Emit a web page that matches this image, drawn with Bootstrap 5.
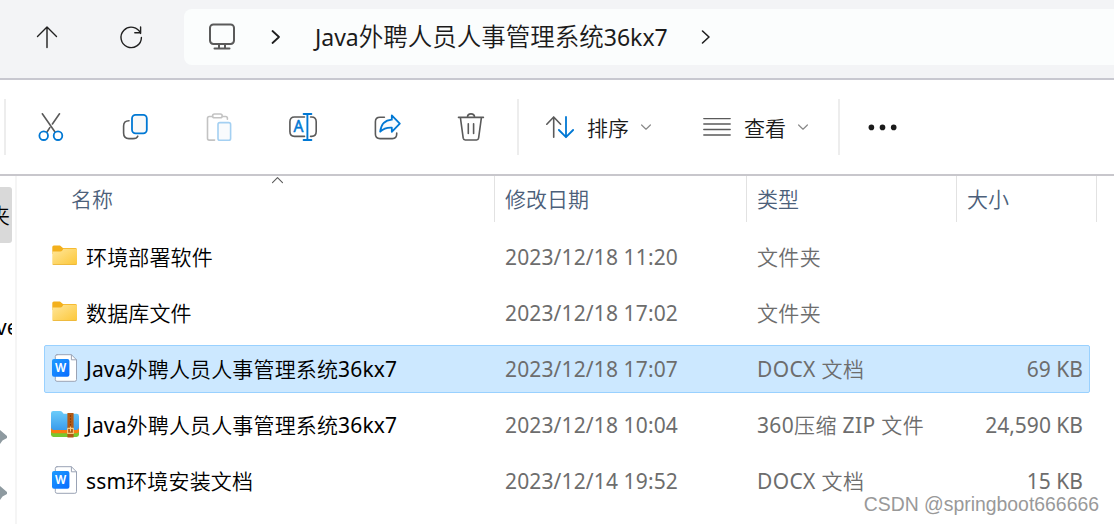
<!DOCTYPE html>
<html lang="zh-CN">
<head>
    <meta charset="UTF-8">
    <title>Java外聘人员人事管理系统36kx7</title>
    <meta name="viewport" content="width=device-width, initial-scale=1">

    <!-- Bootstrap 5 CDN -->
    <link href="https://cdn.jsdelivr.net/npm/bootstrap@5.3.0/dist/css/bootstrap.min.css" rel="stylesheet">
    <style>
        body {
            height: 524px;
            font-family: "Noto Sans", "Noto Sans CJK SC", sans-serif;
            font-size: 21px;
            font-kerning: none;
            line-height: 28px;
            color: #000;
            background: #fff;
        }
        svg {
            display: block;
            flex: none;
            fill: none;
            stroke: #5a5a5a;
            stroke-width: 1.6;
            stroke-linecap: round;
            stroke-linejoin: round;
        }
        .blue { stroke: #0078d4; }
        .dark { stroke: #1f1f1f; }
        .hanzi { font-weight: 350; }

        /* Address bar */
        .address-bar {
            height: 80px;
            padding-top: 9px;
            background: #f3f4f6;
            border-bottom: 2px solid #c8c8d0;
        }
        .nav-tools {
            width: 184px;
            height: 56px;
            gap: 58px;
            padding-left: 34px;
        }
        .address-box {
            height: 56px;
            padding-left: 24px;
            background: #fbfdfd;
            border-radius: 8px 0 0 8px;
            font-size: 23px;
            color: #1b1b1b;
        }
        .address-box .hanzi { font-size: 24.5px; }
        .crumb-sep { margin-left: 34px; }
        .crumb-name { width: 385px; margin-left: 33px; }

        /* Command bar */
        .command-bar {
            height: 96px;
            padding-left: 4px;
            border-bottom: 2px solid #c8c7cc;
            color: #1b1b1b;
        }
        .divider {
            width: 2px;
            height: 56px;
            background: #ededed;
        }
        .tool-btn {
            width: 84px;
            height: 56px;
        }
        .tool-group { margin: 0 4px 0 3px; }
        .sort-btn { margin-left: 27px; }
        .view-btn { margin-left: 51px; }
        .btn-label { margin: 1px 11px 0 13px; }
        .end-divider { margin: 0 28px 0 29px; }

        /* Navigation pane, only its right edge is visible */
        .side-pane {
            width: 17px;
            border-right: 2px solid #f5f5f5;
            padding-top: 11px;
        }
        .side-item {
            width: 12px;
            height: 56px;
        }
        .side-item.current {
            padding-right: 2px;
            background: #d9d9d9;
            border-radius: 0 3px 3px 0;
        }
        .side-text { margin-left: -4px; }
        .side-pin { padding-bottom: 4px; }

        /* File list */
        .list-grid {
            display: grid;
            grid-template-columns: 450px 252px 210px 140px;
        }
        .list-head {
            height: 46px;
            margin-bottom: 11px;
            padding-left: 28px;
            color: #4c607a;
        }
        .head-cell {
            padding: 9px 0 0 10px;
            border-right: 1px solid #e2e2e2;
        }
        .head-name { padding-left: 26px; }
        .sort-mark { margin: -9px 0 0 158px; }
        .file-row {
            display: grid;
            grid-template-columns: 460px 252px 210px 1fr;
            align-items: center;
            width: 1046px;
            height: 48px;
            margin: 0 0 8px 27px;
            padding-right: 6px;
            border: 1px solid transparent;
            border-radius: 2px;
            color: #6d6d6d;
        }
        .file-row.selected {
            background: #cce8ff;
            border-color: #99d1ff;
        }
        .file-name {
            gap: 7px;
            padding-left: 6px;
            color: #000;
            letter-spacing: .15px;
        }
        .file-name svg { margin-top: -2px; }
        .file-date { letter-spacing: .13px; }
        .file-type { letter-spacing: .35px; }

        .watermark {
            right: 15px;
            bottom: 6px;
            font-family: "Liberation Sans", sans-serif;
            font-size: 19.4px;
            color: #999;
            text-shadow: 1px 1px 1px #fff, -1px -1px 1px #fff;
        }
    </style>
</head>
<body class="d-flex flex-column overflow-hidden position-relative">

<!-- Address bar -->
<nav class="address-bar d-flex flex-shrink-0">
    <div class="nav-tools d-flex align-items-center">
        <svg class="dark" width="26" height="26" viewBox="0 0 26 26"><path d="M13 23.5V3M3.5 12.5L13 3L22.5 12.5" stroke-width="1.4"/></svg>
        <svg class="dark" width="26" height="26" viewBox="0 0 26 26"><path d="M22.6 9.4A10.2 10.2 0 1 0 23.4 13.4M22.6 3V8.8H16.8" stroke-width="1.4"/></svg>
    </div>
    <div class="address-box d-flex align-items-center flex-grow-1">
        <svg width="28" height="28" viewBox="0 0 28 28"><rect x="2" y="1.4" width="24" height="19.6" rx="3.4" stroke-width="2"/><path d="M11 21.8V25.6M17 21.8V25.6M6.5 25.6H21.5" stroke-width="2"/></svg>
        <svg class="crumb-sep dark" width="12" height="16" viewBox="0 0 12 16"><path d="M2.5 2L9 8L2.5 14" stroke-width="1.8"/></svg>
        <span class="crumb-name text-nowrap">Java<span class="hanzi">外聘人员人事管理系统</span>36kx7</span>
        <svg class="dark" width="12" height="16" viewBox="0 0 12 16"><path d="M2.5 2L9 8L2.5 14" stroke-width="1.6"/></svg>
    </div>
</nav>

<!-- Command bar -->
<div class="command-bar d-flex align-items-center flex-shrink-0">
    <div class="divider"></div>
    <div class="tool-group d-flex">
        <div class="tool-btn d-flex align-items-center justify-content-center">
            <svg width="28" height="28" viewBox="0 0 28 28"><path d="M5.3 .8L18 19M22.5 .8L15.4 11M12.8 14.6L10 19"/><g class="blue" stroke-width="1.8"><circle cx="6.7" cy="22.7" r="4.3"/><circle cx="21" cy="22.7" r="4.3"/></g></svg>
        </div>
        <div class="tool-btn d-flex align-items-center justify-content-center">
            <svg width="28" height="28" viewBox="0 0 28 28"><path d="M8 7.8Q2.6 7.8 2.6 13V20Q2.6 25.6 8 25.6H12Q15.8 25.6 16.8 23.2"/><rect class="blue" x="11" y="1.8" width="14.8" height="18.6" rx="3.6" fill="#f9f9f9" stroke-width="1.8"/></svg>
        </div>
        <div class="tool-btn d-flex align-items-center justify-content-center">
            <svg width="28" height="28" viewBox="0 0 28 28"><g stroke="#c3c3c3"><path d="M7 3.5H4.3Q2.5 3.5 2.5 5.3V25.3Q2.5 27.1 4.3 27.1H9.6M18 3.5H20.6Q22.4 3.5 22.4 5.3V6.2"/><rect x="7.6" y="1" width="9.6" height="3.8" rx="1.9"/></g><rect x="13" y="9.6" width="12.6" height="17.6" rx="1.8" stroke="#a4d0f2" fill="#f9fbfd"/></svg>
        </div>
        <div class="tool-btn d-flex align-items-center justify-content-center">
            <svg width="28" height="28" viewBox="0 0 28 28"><path d="M15.5 4H5.5Q.9 4 .9 8.8V18.6Q.9 23.4 5.5 23.4H15.5M21.6 4H22.6Q27.2 4 27.2 8.8V18.6Q27.2 23.4 22.6 23.4H21.6"/><path class="blue" d="M18.4 1V27M14.6 1H22.4M14.6 27H22.4" stroke-width="1.9"/><text x="9.4" y="18.6" text-anchor="middle" font-family="Noto Sans" font-size="15.5" fill="#0078d4" stroke="#0078d4" stroke-width=".5">A</text></svg>
        </div>
        <div class="tool-btn d-flex align-items-center justify-content-center">
            <svg width="28" height="28" viewBox="0 0 28 28"><path d="M11.4 4.3H7Q2.4 4.3 2.4 8.8V21Q2.4 25.6 7 25.6H19.4Q23.7 25.6 23.7 21V20"/><path class="blue" d="M18.8 2.4L26.8 10.6L18.8 18.8V14.6C14 14.4 10 15.8 7.2 18.7C8 12 12 7.2 18.8 6.7Z" fill="#f7fafd" stroke-width="1.8"/></svg>
        </div>
        <div class="tool-btn d-flex align-items-center justify-content-center">
            <svg width="28" height="28" viewBox="0 0 28 28"><path d="M1.5 4.4H26.4M10.4 4.2Q10.6 .9 14 .9Q17.4 .9 17.6 4.2M3.4 4.6L6.2 25.2Q6.5 27 8.2 27H19.6Q21.3 27 21.6 25.2L24.4 4.6M11.3 10.8V20.4M16.6 10.8V20.4"/></svg>
        </div>
    </div>
    <div class="divider"></div>
    <div class="sort-btn d-flex align-items-center">
        <svg width="28" height="28" viewBox="0 0 28 28"><path d="M7.7 24.2V4M.8 11.2L7.7 4L14.6 11.2"/><path class="blue" d="M20 4V24.2M12.9 17L20 24.2L27.1 17" stroke-width="1.8"/></svg>
        <span class="btn-label hanzi">排序</span>
        <svg width="12" height="8" viewBox="0 0 12 8"><path d="M1.6 2L6 6.2L10.4 2" stroke="#8a8a8a" stroke-width="1.2"/></svg>
    </div>
    <div class="view-btn d-flex align-items-center">
        <svg width="28" height="28" viewBox="0 0 28 28"><path d="M.8 5.6H27.2M.8 11H27.2M.8 16.5H27.2M.8 22H27.2" stroke-width="1.4"/></svg>
        <span class="btn-label hanzi">查看</span>
        <svg width="12" height="8" viewBox="0 0 12 8"><path d="M1.6 2L6 6.2L10.4 2" stroke="#8a8a8a" stroke-width="1.2"/></svg>
    </div>
    <div class="divider end-divider"></div>
    <svg width="30" height="8" viewBox="0 0 30 8"><g fill="#1b1b1b" stroke="none"><circle cx="3.4" cy="4.4" r="2.8"/><circle cx="14.5" cy="4.4" r="2.8"/><circle cx="25.7" cy="4.4" r="2.8"/></g></svg>
</div>

<div class="d-flex flex-grow-1">
    <!-- Navigation pane -->
    <aside class="side-pane flex-shrink-0">
        <div class="side-item current d-flex align-items-center justify-content-end overflow-hidden"><span class="hanzi">夹</span></div>
        <div class="side-item"></div>
        <div class="side-item d-flex align-items-center overflow-hidden"><span class="side-text">ve</span></div>
        <div class="side-item"></div>
        <div class="side-item side-pin d-flex align-items-center">
            <svg width="8" height="18" viewBox="0 0 8 18"><path d="M0 2L7 8V10L2.5 12.5L0 16Z" fill="#8e9aa0" stroke="none"/></svg>
        </div>
        <div class="side-item side-pin d-flex align-items-center">
            <svg width="8" height="18" viewBox="0 0 8 18"><path d="M0 2L7 8V10L2.5 12.5L0 16Z" fill="#8e9aa0" stroke="none"/></svg>
        </div>
    </aside>

    <!-- File list -->
    <main class="flex-grow-1">
        <div class="list-grid list-head hanzi">
            <div class="head-cell head-name d-flex align-items-start">名称
                <svg class="sort-mark" width="13" height="8" viewBox="0 0 13 8"><path d="M1.5 6.6L6.5 1.6L11.5 6.6" stroke-width="1.1"/></svg>
            </div>
            <div class="head-cell">修改日期</div>
            <div class="head-cell">类型</div>
            <div class="head-cell">大小</div>
        </div>
        <div id="fileList"></div>
    </main>
</div>

<div class="watermark position-absolute text-nowrap">CSDN @springboot666666</div>

<script src="https://cdn.jsdelivr.net/npm/bootstrap@5.3.0/dist/js/bootstrap.bundle.min.js"></script>
<script>
const icons = {
    folder: `<svg width="28" height="28" viewBox="0 0 28 28">
        <defs><linearGradient id="fold" x2="1" y2="1"><stop stop-color="#ffe69a"/><stop offset="1" stop-color="#fcc738"/></linearGradient></defs>
        <g stroke="none"><path d="M1.3 5Q1.3 3.4 2.9 3.4H9L12 6H24.5Q26 6 26 7.5V12H1.3Z" fill="#f3b01c"/>
        <path d="M1.3 9.6H9.3Q10.6 9.6 11.3 8.6L12.4 6.8H24.8Q26 6.8 26 8V21.8Q26 23 24.8 23H2.5Q1.3 23 1.3 21.8Z" fill="url(#fold)"/>
        <path d="M1.6 22.2H25.7Q25.3 23 24.8 23H2.5Q1.8 23 1.6 22.2Z" fill="#e9b43a"/></g></svg>`,
    docx: `<svg width="28" height="28" viewBox="0 0 28 28">
        <defs><linearGradient id="wps" x2="1" y2="1"><stop stop-color="#1e9bff"/><stop offset="1" stop-color="#0a6cff"/></linearGradient></defs>
        <path d="M6 .7H20.4L25.5 5.8V25.6Q25.5 27.3 23.8 27.3H6Q4.3 27.3 4.3 25.6V2.4Q4.3 .7 6 .7Z" fill="#fff" stroke="#9aa3b5" stroke-width="1"/>
        <path d="M20.4 .9V5.8H25.3" stroke="#9aa3b5" stroke-width="1"/>
        <rect x="1" y="5" width="17.4" height="17.8" rx="2" fill="url(#wps)" stroke="none"/>
        <text x="9.7" y="18" text-anchor="middle" font-family="Inter" font-weight="600" font-size="11.5" fill="#fff" stroke="none">W</text></svg>`,
    zip: `<svg width="28" height="28" viewBox="0 0 28 28">
        <defs><linearGradient id="arc" x2="0" y2="1"><stop stop-color="#6cccfa"/><stop offset="1" stop-color="#3a9cec"/></linearGradient></defs>
        <g stroke="none"><path d="M0 18H28V24.6Q28 27 25.6 27H2.4Q0 27 0 24.6Z" fill="#79c82f"/>
        <path d="M0 17H28V21Q28 23.2 25.6 23.2H2.4Q0 23.2 0 21Z" fill="#fb7d10"/>
        <path d="M0 3.2Q0 1 2.2 1H9Q10.4 1 11.2 2L12.6 3.8H25.6Q28 3.8 28 6.2V17.6Q28 20 25.6 20H2.4Q0 20 0 17.6Z" fill="url(#arc)"/>
        <rect x="16.4" y="3" width="6.2" height="24.6" rx=".6" fill="#b35a14"/></g>
        <path d="M19.5 6V16" stroke="#713306" stroke-width="1.3" stroke-dasharray=".1 2.8"/>
        <rect x="16.6" y="18.4" width="5.8" height="5" stroke="#f5cb82" stroke-width="1.1"/>
        <path d="M19.5 17V21" stroke="#f5cb82" stroke-width="1.1"/></svg>`
};

const files = [
    { icon: "folder", name: "环境部署软件", date: "2023/12/18 11:20", type: "文件夹", size: "" },
    { icon: "folder", name: "数据库文件", date: "2023/12/18 17:02", type: "文件夹", size: "" },
    { icon: "docx", name: "Java外聘人员人事管理系统36kx7", date: "2023/12/18 17:07", type: "DOCX 文档", size: "69 KB", selected: true },
    { icon: "zip", name: "Java外聘人员人事管理系统36kx7", date: "2023/12/18 10:04", type: "360压缩 ZIP 文件", size: "24,590 KB" },
    { icon: "docx", name: "ssm环境安装文档", date: "2023/12/14 19:52", type: "DOCX 文档", size: "15 KB" }
];

// Chinese runs are drawn in a lighter weight than the Latin ones
function mixed(text) {
    return text.replace(/[\u4e00-\u9fff]+/g, run => `<span class="hanzi">${run}</span>`);
}

// Render file rows
document.getElementById("fileList").innerHTML = files.map(f => `
    <div class="file-row text-nowrap${f.selected ? " selected" : ""}">
        <div class="file-name d-flex align-items-center">${icons[f.icon]}<span>${mixed(f.name)}</span></div>
        <div class="file-date">${f.date}</div>
        <div class="file-type">${mixed(f.type)}</div>
        <div class="text-end">${f.size}</div>
    </div>`).join("");
</script>

</body>
</html>
